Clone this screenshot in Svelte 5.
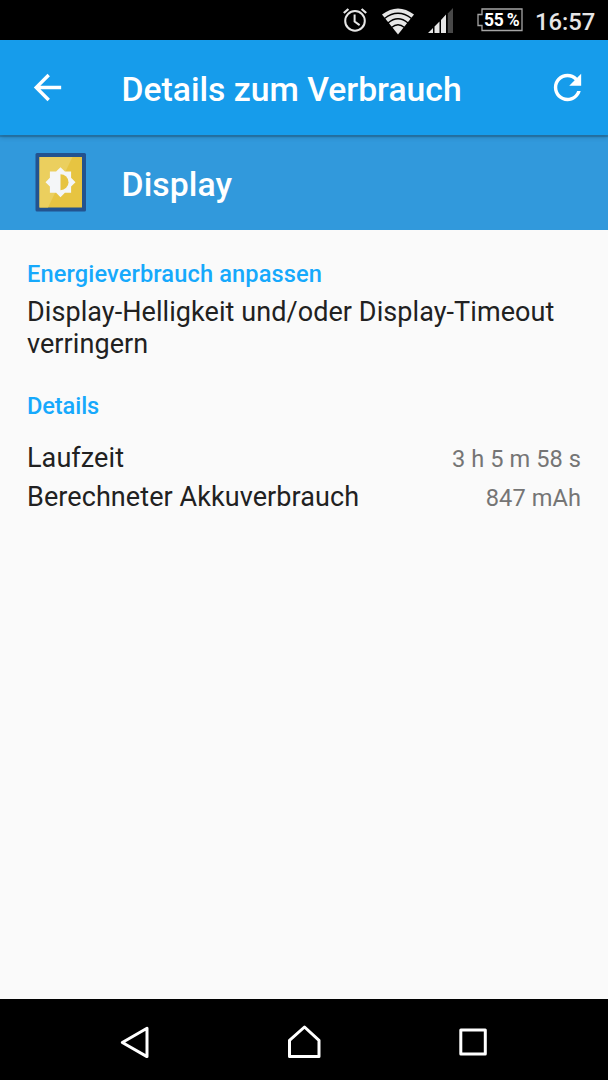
<script>
    const title = "Details zum Verbrauch";
    const clock = "16:57";
    const battery = "55 %";
    const details = [
        { label: "Laufzeit", value: "3 h 5 m 58 s" },
        { label: "Berechneter Akkuverbrauch", value: "847 mAh" },
    ];
</script>

<div class="screen">
    <div class="status-bar">
        <svg class="alarm" width="26" height="28" viewBox="0 0 26 28">
            <g fill="none" stroke="#e6e6e6">
                <circle cx="13" cy="14.9" r="9.8" stroke-width="2" />
                <path d="M12.6 8.500v7l5 3.600" stroke-width="2" />
                <path d="M1.800 7l4.600-4M24.200 7l-4.600-4" stroke-width="2.300" />
            </g>
        </svg>
        <svg class="wifi" width="34" height="28" viewBox="0 0 34 28">
            <path d="M1 7.500Q17-4.500 33 7.500L17 27.500z" fill="#e6e6e6" />
            <g fill="none" stroke="#000" stroke-width="1.400">
                <path d="M3.500 11.500Q17 1 30.500 11.500" />
                <path d="M7 16Q17 7.500 27 16" />
                <path d="M10.500 20.500Q17 15 23.500 20.500" />
            </g>
        </svg>
        <svg class="signal" width="26" height="26" viewBox="0 0 26 26">
            <path
                d="M0 25l5-5v5zM6.500 18.500l5-5V25h-5zM13 12l5-5.500V25h-5z"
                fill="#e6e6e6"
            />
            <path d="M19.800 5.500L25 0v25h-5.200z" fill="#484848" />
        </svg>
        <div class="battery">
            <svg width="46" height="24" viewBox="0 0 46 24">
                <path
                    d="M5 1h40v21.500H5v-5H1v-11h4z"
                    fill="none"
                    stroke="#a5a5a5"
                    stroke-width="1.300"
                />
            </svg>
            <span>{battery}</span>
        </div>
        <span class="clock">{clock}</span>
    </div>

    <header class="app-bar">
        <svg width="41" height="41" viewBox="0 0 24 24" fill="#fff">
            <path
                d="M20 11H7.830l5.590-5.590L12 4l-8 8 8 8 1.410-1.410L7.830 13H20v-2z"
            />
        </svg>
        <h1>{title}</h1>
        <svg width="41" height="41" viewBox="0 0 24 24" fill="#fff">
            <path
                d="M17.650 6.350C16.200 4.900 14.210 4 12 4c-4.420 0-7.990 3.580-7.990 8s3.570 8 7.990 8c3.730 0 6.840-2.550 7.730-6h-2.080c-.82 2.330-3.040 4-5.650 4-3.310 0-6-2.690-6-6s2.690-6 6-6c1.660 0 3.140.69 4.220 1.780L13 11h7V4l-2.350 2.350z"
            />
        </svg>
    </header>

    <div class="entry">
        <svg width="52" height="60" viewBox="0 0 52 60">
            <rect x=".5" y="1" width="50.500" height="58.500" rx="1.500" fill="#23538f" />
            <rect x="4.500" y="5" width="42.500" height="50.500" fill="#e7c441" />
            <path d="M4.500 5h33L13 55.500H4.500z" fill="#ebcf5e" />
            <path
                d="M25.500 15.200l4.400 4.400h6.200v6.200l4.400 4.400-4.400 4.400v6.200h-6.200l-4.400 4.400-4.400-4.400h-6.200v-6.200l-4.400-4.400 4.400-4.400v-6.200h6.200z"
                fill="#f4f6f8"
            />
            <path d="M25.500 22.200a8 8 0 0 1 0 16z" fill="#e7c441" />
        </svg>
        <h2>Display</h2>
    </div>

    <main>
        <h3>Energieverbrauch anpassen</h3>
        <p class="hint">
            Display-Helligkeit und/oder Display-Timeout verringern
        </p>
        <h3 class="short">Details</h3>
        <div class="details">
            {#each details as row}
                <div class="row">
                    <span>{row.label}</span>
                    <span class="value">{row.value}</span>
                </div>
            {/each}
        </div>
    </main>

    <nav>
        <svg width="30" height="34" viewBox="0 0 30 34">
            <path d="M2.300 17.500L27 3.300v28.300z" />
        </svg>
        <svg width="34" height="34" viewBox="0 0 34 34">
            <path d="M2.500 15.300L17.500 2 32 15.300v16.200H2.500z" />
        </svg>
        <svg width="30" height="34" viewBox="0 0 30 34">
            <path d="M2.800 5h24.500v24H2.800z" />
        </svg>
    </nav>
</div>

<style>
    :global(body) {
        background: #000;
    }
    .screen {
        display: flex;
        flex-direction: column;
        width: 608px;
        height: 1080px;
        overflow: hidden;
        font-family: Roboto, sans-serif;
        background: #fafafa;
    }
    h1,
    h2,
    h3,
    p {
        margin: 0;
        font-weight: 500;
    }
    svg {
        display: block;
        flex: none;
    }
    .status-bar {
        display: flex;
        justify-content: flex-end;
        align-items: center;
        box-sizing: border-box;
        height: 40px;
        flex: none;
        padding-right: 14px;
        background: #000;
        color: #e6e6e6;
    }
    .wifi {
        margin: 2px 0 0 13px;
    }
    .signal {
        margin: 2px 0 0 13px;
    }
    .battery {
        display: grid;
        align-items: center;
        margin-left: 23px;
    }
    .battery svg,
    .battery span {
        grid-area: 1 / 1;
    }
    .battery span {
        padding-left: 7px;
        font-size: 17.5px;
        font-weight: 700;
        letter-spacing: -0.2px;
        word-spacing: -1px;
        color: #fff;
        white-space: nowrap;
    }
    .clock {
        width: 59px;
        margin-left: 12px;
        padding-top: 3px;
        font-size: 23.8px;
        font-weight: 500;
        text-align: right;
    }
    .app-bar {
        display: flex;
        align-items: center;
        box-sizing: border-box;
        height: 95px;
        flex: none;
        padding: 0 20px 0 27px;
        background: #169ceb;
        color: #fff;
        box-shadow:
            0 2px 1px rgba(0, 0, 0, 0.16),
            0 2px 5px rgba(0, 0, 0, 0.2);
        z-index: 1;
    }
    h1 {
        flex: 1;
        margin-left: 53.5px;
        padding-top: 3px;
        font-size: 33.7px;
    }
    .entry {
        display: flex;
        align-items: center;
        box-sizing: border-box;
        height: 94.5px;
        flex: none;
        padding-left: 35px;
        background: #3199dc;
        color: #fff;
    }
    h2 {
        margin-left: 34.5px;
        padding-top: 4px;
        font-size: 33.75px;
        letter-spacing: 0.1px;
    }
    main {
        flex: 1;
        padding: 29.5px 27px 0;
        color: #212121;
        font-size: 27px;
    }
    h3 {
        color: #16a9fc;
        font-size: 23.6px;
        line-height: 30px;
        letter-spacing: 0.13px;
    }
    h3.short {
        letter-spacing: -0.1px;
    }
    .hint {
        margin: 7px 0 31px;
        font-weight: 400;
        line-height: 32px;
        letter-spacing: 0.07px;
    }
    .details {
        margin-top: 17px;
    }
    .row {
        display: flex;
        justify-content: space-between;
        align-items: center;
        height: 39.5px;
        letter-spacing: 0.08px;
    }
    .value {
        padding-top: 2px;
        color: #757575;
        font-size: 23.6px;
    }
    nav {
        display: flex;
        align-items: center;
        box-sizing: border-box;
        height: 81px;
        flex: none;
        padding: 5px 0 0 120px;
        gap: 137px;
        background: #000;
    }
    nav path {
        fill: none;
        stroke: #fff;
        stroke-width: 3;
        stroke-linejoin: round;
    }
</style>
